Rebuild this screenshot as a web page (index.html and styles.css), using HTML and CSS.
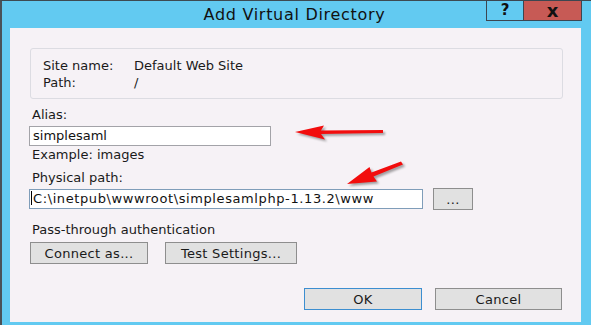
FILE: index.html
```html
<!DOCTYPE html>
<html lang="en">
<head>
    <meta charset="UTF-8">
    <title>Add Virtual Directory</title>
    <link rel="stylesheet" href="styles.css">
</head>
<body>
    <div class="window">
        <div class="titlebar">
            <div></div>
            <div class="title">Add Virtual Directory</div>
            <div class="controls">
                <button class="ctl help">?</button>
                <button class="ctl close">x</button>
            </div>
        </div>
        <div class="client">
            <div class="site-box">
                <div class="info-row"><span class="info-key">Site name:</span><span>Default Web Site</span></div>
                <div class="info-row"><span class="info-key">Path:</span><span>/</span></div>
            </div>

            <label class="label first">Alias:</label>
            <div class="field alias">simplesaml</div>
            <div class="label hint">Example: images</div>

            <label class="label">Physical path:</label>
            <div class="path-row">
                <div class="field path focused"><span class="caret"></span>C:\inetpub\wwwroot\simplesamlphp-1.13.2\www</div>
                <button class="btn browse">...</button>
            </div>

            <div class="label pass">Pass-through authentication</div>
            <div class="auth-row">
                <button class="btn connect">Connect as...</button>
                <button class="btn test">Test Settings...</button>
            </div>

            <div class="footer">
                <button class="btn ok">OK</button>
                <button class="btn cancel">Cancel</button>
            </div>
        </div>

        <!-- annotation arrows drawn over the dialog -->
        <svg class="arrows" width="591" height="325" viewBox="0 0 591 325">
            <polygon points="295,132 324,125.5 321,130.5 383,130 383,133 321,134 325,139.5"></polygon>
            <polygon points="347,184 369.5,167 371.5,172.5 401,161.5 403,164.5 373.5,176.5 377,181.5"></polygon>
        </svg>
    </div>
</body>
</html>
```

FILE: styles.css
```css
* {
  margin: 0;
  padding: 0;
  box-sizing: border-box;
}

body {
  font-family: 'DejaVu Sans', 'Liberation Sans', sans-serif;
  font-size: 13px;
  line-height: 16px;
  color: #1a1a1a;
  background-color: #62caf1;
}

.window {
  position: relative;
  width: 591px;
  height: 325px;
  background-color: #62caf1;
  border-top: 1px solid #3d4a52;
  border-left: 2px solid #4a5258;
}

.titlebar {
  display: grid;
  grid-template-columns: 1fr auto 1fr;
  height: 27px;
}

.title {
  font-size: 16px;
  letter-spacing: 0.7px;
  color: #111;
  padding-top: 6px;
  margin-left: -4px;
}

.controls {
  display: flex;
  justify-content: flex-end;
  align-items: flex-start;
  margin-top: -1px;
  padding-right: 9px;
}

.ctl {
  height: 21px;
  border: 1px solid #3c4650;
  font-family: 'DejaVu Sans', sans-serif;
  font-weight: bold;
  font-size: 15px;
  line-height: 17px;
  color: #111;
}

.help {
  width: 37px;
  background-color: #62caf1;
  border-right: none;
}

.close {
  width: 59px;
  font-size: 18px;
  background-color: #c75a55;
}

.client {
  display: flex;
  flex-direction: column;
  align-items: flex-start;
  width: 571px;
  height: 294px;
  margin-left: 8px;
  padding: 20px 20px 12px 19px;
  background-color: #f6f2f6;
}

.site-box {
  width: 533px;
  height: 51px;
  margin-left: 1px;
  padding: 8px 12px;
  border: 1px solid #dcdce2;
  border-radius: 3px;
}

.info-row {
  display: flex;
  line-height: 17px;
}

.info-key {
  width: 91px;
}

.label {
  display: block;
  padding-left: 3px;
  margin-top: 7px;
}

.label.first {
  margin-top: 8px;
}

.hint {
  margin-top: 1px;
}

.pass {
  margin-top: 12px;
}

.field {
  height: 20px;
  margin-top: 3px;
  padding: 1px 3px;
  border: 1px solid #a3a3a8;
  background-color: #fff;
  color: #111;
  white-space: nowrap;
}

.alias {
  width: 242px;
}

.path-row {
  display: flex;
  align-items: center;
  gap: 10px;
  margin-top: 2px;
}

.path {
  width: 394px;
  margin-top: 0;
  padding-left: 1px;
  letter-spacing: 0.6px;
  border-color: #7f9db9;
}

.caret {
  display: inline-block;
  width: 1px;
  height: 14px;
  margin-right: 1px;
  vertical-align: -2px;
  background-color: #000;
}

.btn {
  height: 22px;
  font-family: 'DejaVu Sans', sans-serif;
  font-size: 13px;
  letter-spacing: 0.3px;
  color: #1a1a1a;
  background-color: #e1e1e1;
  border: 1px solid #8e8e8e;
}

.browse {
  width: 40px;
}

.auth-row {
  display: flex;
  gap: 17px;
  margin-top: 4px;
  margin-left: 1px;
}

.connect {
  width: 118px;
}

.test {
  width: 132px;
}

.footer {
  display: flex;
  gap: 13px;
  align-self: flex-end;
  margin-top: 24px;
}

.ok {
  width: 118px;
  border-color: #3c8ed0;
}

.cancel {
  width: 127px;
  margin-right: -1px;
}

.arrows {
  position: absolute;
  top: -1px;
  left: -2px;
  pointer-events: none;
}

.arrows polygon {
  fill: #f20d0d;
  filter: drop-shadow(2px 2px 1px rgba(0, 0, 0, 0.35));
}
```
